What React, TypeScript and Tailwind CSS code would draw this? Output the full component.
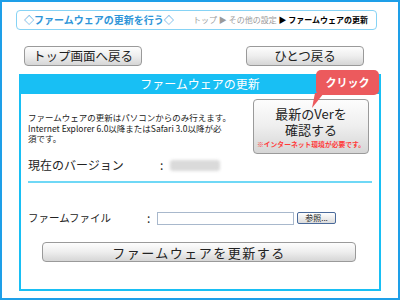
import React from "react";

const btn =
  "flex items-center justify-center rounded-[4px] border border-[#9a9a9a] bg-gradient-to-b from-[#fdfdfd] via-[#eeeeee] to-[#d6d6d6] text-[#222]";

export default function App() {
  return (
    <div className="w-[400px] h-[300px] box-border border-2 border-[#1e9fe8] bg-white font-['Noto_Sans_CJK_JP',sans-serif] flex flex-col overflow-hidden">
      {/* header */}
      <div className="mt-[8px] ml-[14px] w-[361px] h-[20px] box-border border border-[#86d3f5] rounded-[4px] flex items-center pl-[7px] pr-[8px]">
        <span className="text-[10px] leading-none text-[#2f95d8] font-bold">◇ファームウェアの更新を行う◇</span>
        <span className="ml-auto text-[8px] leading-none text-[#9a9a9a] whitespace-nowrap">
          トップ ▶ その他の設定 <span className="text-black font-bold">▶ ファームウェアの更新</span>
        </span>
      </div>

      {/* nav buttons */}
      <div className="mt-[16px] flex ml-[22px]">
        <div className={`${btn} w-[118px] h-[20px] text-[12.5px] leading-none`}>トップ画面へ戻る</div>
        <div className={`${btn} w-[118px] h-[20px] text-[12.5px] leading-none ml-[104px]`}>ひとつ戻る</div>
      </div>

      {/* panel */}
      <div className="relative mt-[8px] ml-[17px] w-[362px] h-[217px] box-border border-2 border-t-0 border-[#18bff4] flex flex-col">
        <div className="h-[20px] -mx-[2px] bg-[#18bff4] flex items-center justify-center text-white text-[12px] leading-none">
          ファームウェアの更新
        </div>

        <div className="flex pl-[7px] pr-[10px] pt-[5px]">
          <div className="flex-1 pt-[13px] text-[8.5px] leading-[10.5px] text-[#222]">
            <div>ファームウェアの更新はパソコンからのみ行えます。</div>
            <div>Internet Explorer 6.0以降またはSafari 3.0以降が必</div>
            <div>須です。</div>
          </div>
          <div className={`${btn} w-[116px] h-[55px] flex-col shrink-0`}>
            <span className="text-[13px] leading-[16px] mt-[2px]">最新のVerを</span>
            <span className="text-[13px] leading-[16px]">確認する</span>
            <span className="text-[6.8px] leading-[10px] text-[#ff3b3b] font-bold whitespace-nowrap mt-[1px]">※インターネット環境が必要です。</span>
          </div>
        </div>

        {/* click bubble */}
        <div className="absolute left-[295px] top-[-4px] w-[63px] h-[25px] rounded-[5px] bg-[#ec5a5d] flex items-center justify-center text-white font-bold text-[11px] leading-none">
          クリック
        </div>
        <svg className="absolute left-[290px] top-[19px]" width="14" height="16" viewBox="0 0 14 16">
          <polygon points="4,0 13,0 1,15" fill="#ec5a5d" />
        </svg>

        <div className="mt-[3px] ml-[7px] flex items-center h-[16px]">
          <span className="text-[12px] leading-none text-[#222] w-[132px]">現在のバージョン</span>
          <span className="text-[12px] leading-none text-[#222] w-[10px]">:</span>
          <div className="w-[50px] h-[11px] rounded-[3px] bg-[#dadada] blur-[1.5px]" />
        </div>

        <div className="mt-[8px] ml-[7px] w-[344px] h-[2px] bg-[#6fd8f6]" />

        <div className="mt-[28px] ml-[7px] flex items-center h-[14px]">
          <span className="text-[10.5px] leading-none text-[#222] w-[119px]">ファームファイル</span>
          <span className="text-[12px] leading-none text-[#222] w-[10px]">:</span>
          <div className="w-[137px] h-[13px] box-border border border-[#a8b8cc] bg-white" />
          <div className="ml-[3px] w-[39px] h-[12px] box-border border border-[#4a6a9a] rounded-[2px] bg-gradient-to-b from-white to-[#dcdcdc] flex items-center justify-center text-[8px] leading-none text-[#222]">
            参照...
          </div>
        </div>

        <div className={`${btn} mt-[17px] ml-[21px] w-[314px] h-[20px] text-[13px] leading-none tracking-[1.5px]`}>
          ファームウェアを更新する
        </div>
      </div>
    </div>
  );
}
